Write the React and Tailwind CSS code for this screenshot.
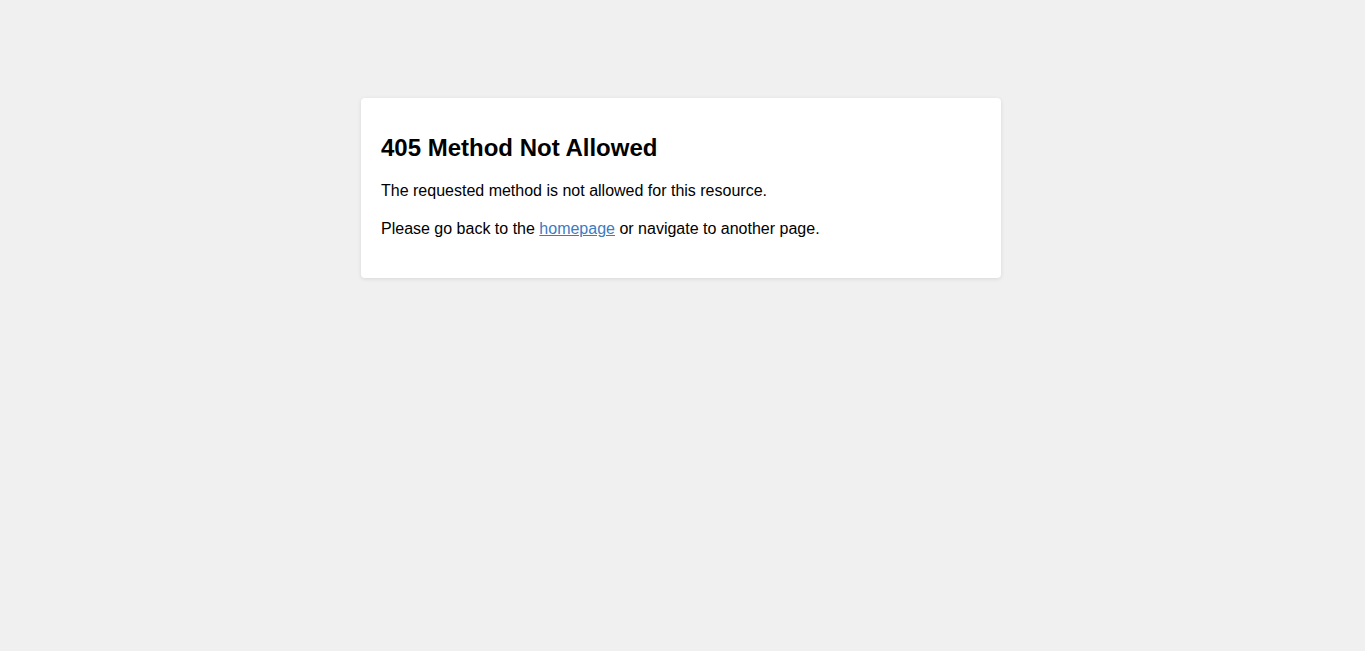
import React from 'react';

const App = () => {
  return (
    <div
      className="min-h-screen bg-[#f0f0f0] pt-[98px] pr-[3px] text-black"
      style={{ fontFamily: '"Liberation Sans", Arial, sans-serif' }}
    >
      <div className="mx-auto w-[640px] rounded-[4px] bg-white p-5 shadow-[0_1px_4px_rgba(0,0,0,0.1)]">
        <h1 className="mt-4 mb-5 text-[24px] font-bold leading-[normal]">405 Method Not Allowed</h1>
        <p className="my-5 text-[16px] leading-[normal]">The requested method is not allowed for this resource.</p>
        <p className="mt-5 mb-5 text-[16px] leading-[normal]">
          Please go back to the{' '}
          <a href="#" className="text-[#3b7bbf] underline">
            homepage
          </a>{' '}
          or navigate to another page.
        </p>
      </div>
    </div>
  );
};

export default App;
